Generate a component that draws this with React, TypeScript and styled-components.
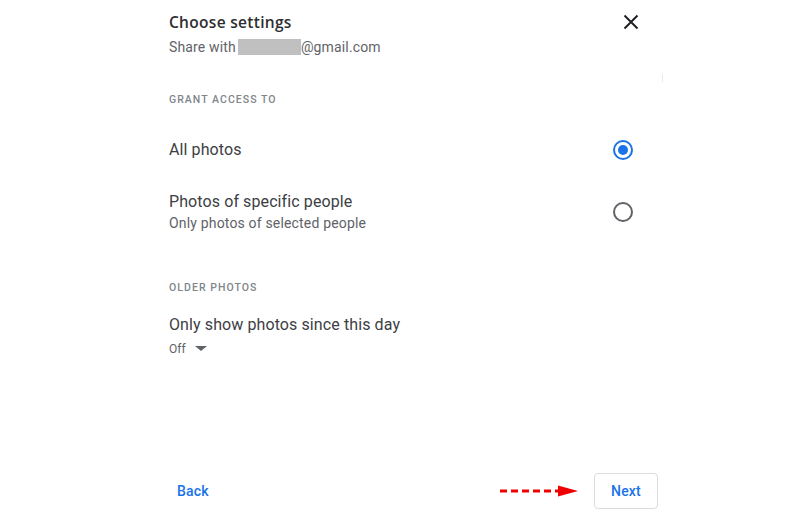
import React from "react";
import styled, { createGlobalStyle } from "styled-components";

const Global = createGlobalStyle`
  html, body { margin: 0; padding: 0; background: #fff; }
  body { font-family: Roboto, "Liberation Sans", Arial, sans-serif; }
`;

const Page = styled.div`
  width: 800px;
  height: 512px;
  box-sizing: border-box;
  padding: 12px 142px 3px 169px;
  display: flex;
  flex-direction: column;
  position: relative;
`;

const Header = styled.div`
  display: flex;
  justify-content: space-between;
  align-items: flex-start;
`;

const Title = styled.div`
  font-family: "Open Sans", Roboto, sans-serif;
  font-size: 15.5px;
  line-height: 20px;
  font-weight: 600;
  letter-spacing: 0.3px;
  color: #2d2f31;
`;

const Sub = styled.div`
  margin-top: 5px;
  font-size: 14px;
  line-height: 20px;
  letter-spacing: 0.15px;
  color: #5f6368;
  display: flex;
  align-items: center;
`;

const Redacted = styled.span`
  display: inline-block;
  width: 63px;
  height: 16px;
  background: #c0c0c0;
  margin-left: 2px;
`;

const Close = styled.button`
  border: 0;
  background: none;
  padding: 0;
  margin: 0 17px 0 0;
  width: 20px;
  height: 20px;
  display: flex;
  align-items: center;
  justify-content: center;
  cursor: pointer;
`;

const ScrollMark = styled.div`
  position: absolute;
  left: 662px;
  top: 74px;
  width: 1px;
  height: 8px;
  background: #e8e8e8;
`;

const SectionLabel = styled.div<{ $top: number }>`
  margin-top: ${(p) => p.$top}px;
  font-size: 10.5px;
  line-height: 16px;
  font-weight: 500;
  letter-spacing: 1.05px;
  color: #80868b;
  text-transform: uppercase;
`;

const Option = styled.div<{ $top: number }>`
  margin-top: ${(p) => p.$top}px;
  margin-right: 24px;
  display: flex;
  align-items: center;
  justify-content: space-between;
  min-height: 48px;
`;

const OptionText = styled.div`
  display: flex;
  flex-direction: column;
  gap: 1px;
`;

const Primary = styled.div`
  font-size: 16px;
  line-height: 20px;
  letter-spacing: 0.1px;
  color: #3c4043;
`;

const Secondary = styled.div`
  font-size: 14px;
  line-height: 20px;
  letter-spacing: 0.17px;
  color: #5f6368;
`;

const Radio = styled.span<{ $on?: boolean }>`
  width: 20px;
  height: 20px;
  box-sizing: border-box;
  border-radius: 50%;
  border: 2px solid ${(p) => (p.$on ? "#1a73e8" : "#5f6368")};
  display: flex;
  align-items: center;
  justify-content: center;
  margin-right: 1px;
  &::after {
    content: "";
    width: 10px;
    height: 10px;
    border-radius: 50%;
    background: ${(p) => (p.$on ? "#1a73e8" : "transparent")};
  }
`;

const Setting = styled.div`
  margin-top: 17px;
  font-size: 16px;
  line-height: 24px;
  letter-spacing: 0.1px;
  color: #3c4043;
`;

const Dropdown = styled.div`
  margin-top: 0px;
  display: flex;
  align-items: center;
  gap: 9px;
  font-size: 12px;
  line-height: 24px;
  color: #5f6368;
`;

const Caret = styled.span`
  width: 0;
  height: 0;
  border-left: 6px solid transparent;
  border-right: 6px solid transparent;
  border-top: 5px solid #5f6368;
  margin-top: -1px;
`;

const Footer = styled.div`
  margin-top: auto;
  display: flex;
  align-items: center;
  justify-content: space-between;
`;

const TextButton = styled.button`
  border: 0;
  background: none;
  padding: 0 8px;
  height: 36px;
  font-family: Roboto, "Liberation Sans", Arial, sans-serif;
  font-size: 14px;
  font-weight: 500;
  color: #1a73e8;
  letter-spacing: 0.2px;
  cursor: pointer;
`;

const RightGroup = styled.div`
  display: flex;
  align-items: center;
  gap: 16px;
`;

const OutlineButton = styled.button`
  width: 64px;
  height: 36px;
  box-sizing: border-box;
  border: 1px solid #dadce0;
  border-radius: 4px;
  background: #fff;
  font-family: Roboto, "Liberation Sans", Arial, sans-serif;
  font-size: 14px;
  font-weight: 500;
  letter-spacing: 0.2px;
  color: #1a73e8;
  cursor: pointer;
`;

export default function App() {
  return (
    <>
      <Global />
      <Page>
        <Header>
          <div>
            <Title>Choose settings</Title>
            <Sub>
              Share with <Redacted />@gmail.com
            </Sub>
          </div>
          <Close aria-label="Close">
            <svg width="16" height="16" viewBox="0 0 16 16">
              <path d="M1.5 1.5 L14.5 14.5 M14.5 1.5 L1.5 14.5" stroke="#202124" strokeWidth="2" />
            </svg>
          </Close>
        </Header>
        <ScrollMark />
        <SectionLabel $top={35}>Grant access to</SectionLabel>
        <Option $top={18}>
          <OptionText>
            <Primary>All photos</Primary>
          </OptionText>
          <Radio $on />
        </Option>
        <Option $top={14}>
          <OptionText>
            <Primary>Photos of specific people</Primary>
            <Secondary>Only photos of selected people</Secondary>
          </OptionText>
          <Radio />
        </Option>
        <SectionLabel $top={44}>Older photos</SectionLabel>
        <Setting>Only show photos since this day</Setting>
        <Dropdown>
          Off <Caret />
        </Dropdown>
        <Footer>
          <TextButton>Back</TextButton>
          <RightGroup>
            <svg width="78" height="12" viewBox="0 0 78 12">
              <line x1="0" y1="6" x2="60" y2="6" stroke="#e00" strokeWidth="3" strokeDasharray="7 4" />
              <polygon points="58,0.5 78,6 58,11.5" fill="#e00" />
            </svg>
            <OutlineButton>Next</OutlineButton>
          </RightGroup>
        </Footer>
      </Page>
    </>
  );
}
